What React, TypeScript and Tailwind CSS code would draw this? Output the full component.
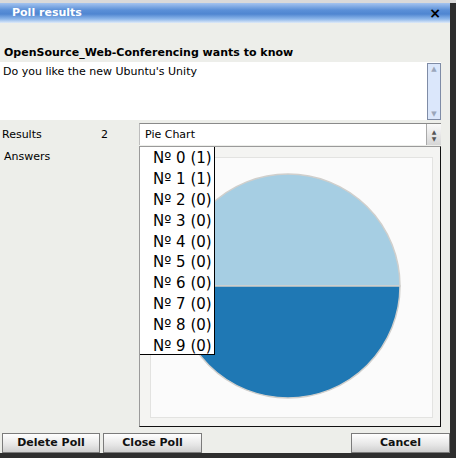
import React from "react";

const answers = [
  { n: 0, votes: 1 },
  { n: 1, votes: 1 },
  { n: 2, votes: 0 },
  { n: 3, votes: 0 },
  { n: 4, votes: 0 },
  { n: 5, votes: 0 },
  { n: 6, votes: 0 },
  { n: 7, votes: 0 },
  { n: 8, votes: 0 },
  { n: 9, votes: 0 },
];

function PieChart() {
  // two equal halves, drawn around the centre of the svg
  const r = 112;
  const cx = 137;
  const cy = 128;
  return (
    <svg width="283" height="261" viewBox="0 0 283 261">
      <path
        d={`M ${cx - r} ${cy} A ${r} ${r} 0 0 1 ${cx + r} ${cy} Z`}
        fill="#a6cee3"
        stroke="#d0cfcc"
        strokeWidth="1.5"
      />
      <path
        d={`M ${cx + r} ${cy} A ${r} ${r} 0 0 1 ${cx - r} ${cy} Z`}
        fill="#1f78b4"
        stroke="#d0cfcc"
        strokeWidth="1.5"
      />
    </svg>
  );
}

function Btn({ label, className }: { label: string; className: string }) {
  return (
    <button
      className={`h-[20px] border border-[#7b7b7b] bg-[linear-gradient(#ffffff,#e6e6e6_60%,#cfcfcf)] text-[11px] font-bold text-[#111] ${className}`}
    >
      {label}
    </button>
  );
}

export default function App() {
  return (
    <div
      className="w-[456px] h-[458px] bg-[#2e2e2e] overflow-hidden"
      style={{ fontFamily: '"DejaVu Sans", Verdana, sans-serif' }}
    >
      <div className="h-[3px] w-full bg-[#d9d9d9]" />
      <div className="w-[450px] h-[450px] flex flex-col bg-[#edeeea]">
        {/* Title bar */}
        <div className="h-[20px] flex items-center justify-between pl-[12px] pr-[9px] bg-[linear-gradient(#a4c4ef,#5b90d8_35%,#4f86d1_55%,#8db6ea_80%,#dfeaf8)]">
          <span className="text-[11px] font-bold text-white pt-[1px]">Poll results</span>
          <span className="text-[14px] font-bold text-black leading-none">×</span>
        </div>

        {/* Question */}
        <div className="pt-[23px] pl-[4px] h-[40px] text-[11px] font-bold text-black leading-[14px]">
          OpenSource_Web-Conferencing wants to know
        </div>
        <div className="flex w-[441px] h-[58px] bg-white">
          <div className="flex-1 pl-[3px] pt-[3px] text-[11px] text-black leading-[14px]">
            Do you like the new Ubuntu's Unity
          </div>
          <div className="w-[14px] mt-[1px] h-[57px] border border-[#7f8ca6] bg-[#dbe7fb] flex flex-col justify-between items-center">
            <span className="text-[7px] leading-[10px] text-[#9aa6ba]">▲</span>
            <span className="text-[7px] leading-[10px] text-[#9aa6ba]">▼</span>
          </div>
        </div>

        {/* Results row */}
        <div className="flex items-start h-[27px] pt-[3px]">
          <span className="w-[101px] pl-[2px] pt-[4px] text-[11px] text-black">Results</span>
          <span className="w-[38px] pt-[4px] text-[11px] text-black">2</span>
          <div className="w-[302px] h-[22px] flex border-t border-[#8a8a8a] border-l border-l-[#bdbdbd] bg-white">
            <span className="flex-1 pl-[5px] pt-[3px] text-[11px] text-black">Pie Chart</span>
            <div className="w-[15px] border-l border-[#a9a9a9] bg-[linear-gradient(#fafafa,#d6d6d6)] flex flex-col items-center justify-center">
              <span className="text-[6px] leading-[7px] text-[#555]">▲</span>
              <span className="text-[6px] leading-[7px] text-[#555]">▼</span>
            </div>
          </div>
        </div>

        {/* Answers + chart */}
        <div className="flex h-[280px]">
          <span className="w-[139px] pl-[4px] pt-[2px] text-[11px] text-black">Answers</span>
          <div className="relative w-[302px] h-[281px] -mt-[1px] border border-[#111] border-l-[#9a9a9a] border-t-[#9a9a9a] bg-[#f4f4f2] pt-[10px] pl-[10px]">
            <div className="w-[283px] h-[261px] border border-[#e3e3e1] bg-[#fbfbfb]">
              <PieChart />
            </div>
            <div className="absolute left-0 top-0 w-[75px] h-[208px] bg-white border-r border-b border-black pt-[1px]">
              {answers.map((a) => (
                <div key={a.n} className="h-[20.9px] pl-[13px] text-[15px] leading-[20px] text-black whitespace-nowrap">
                  Nº {a.n} ({a.votes})
                </div>
              ))}
            </div>
          </div>
        </div>

        {/* Buttons */}
        <div className="flex items-center pt-[6px] pl-[2px]">
          <Btn label="Delete Poll" className="w-[98px]" />
          <Btn label="Close Poll" className="w-[99px] ml-[3px]" />
          <div className="flex-1" />
          <Btn label="Cancel" className="w-[99px]" />
        </div>
      </div>
    </div>
  );
}
